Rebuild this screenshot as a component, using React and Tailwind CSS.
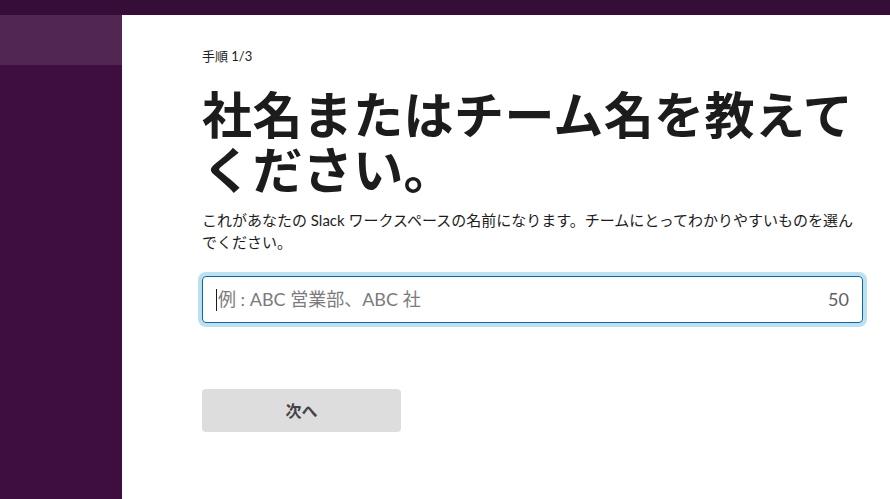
export default function App() {
  const font = { fontFamily: "Lato, 'Noto Sans CJK JP', 'Noto Sans', sans-serif" }

  return (
    <div className="flex flex-col h-[499px] w-[890px] overflow-hidden bg-white" style={font}>
      {/* top bar */}
      <div className="h-[15px] bg-[#350d36] shrink-0" />

      <div className="flex flex-1 min-h-0">
        {/* sidebar */}
        <aside className="w-[122px] shrink-0 bg-[#3f0e40]">
          <div className="h-[50px] bg-[#522653]" />
        </aside>

        {/* main */}
        <main className="flex-1 pl-[80px] pt-[32px]">
          <div className="w-[661px]">
            <p className="text-[13px] leading-[18px] text-[#1d1c1d]">手順 1/3</p>

            <h1 className="mt-[23px] text-[50px] leading-[55px] font-bold text-[#1d1c1d] tracking-[0.4px]">
              社名またはチーム名を教えてください。
            </h1>

            <p className="mt-[11px] text-[15px] leading-[22px] text-[#1d1c1d]">
              これがあなたの Slack ワークスペースの名前になります。チームにとってわかりやすいものを選んでください。
            </p>

            <div className="mt-[23px] h-[47px] rounded-[4px] border border-[#1264a3] ring-4 ring-[#1d9bd1]/30 flex items-center pl-[13px] pr-[13px]">
              <span className="w-px h-[22px] bg-[#1d1c1d]" />
              <span className="text-[18px] text-[#7c7a7c] ml-px">例 : ABC 営業部、ABC 社</span>
              <span className="ml-auto text-[18px] text-[#616061]">50</span>
            </div>

            <button className="mt-[66px] w-[199px] h-[43px] rounded-[4px] bg-[#dddddd] text-[16px] font-bold text-[#454245]">
              次へ
            </button>
          </div>
        </main>
      </div>
    </div>
  )
}
